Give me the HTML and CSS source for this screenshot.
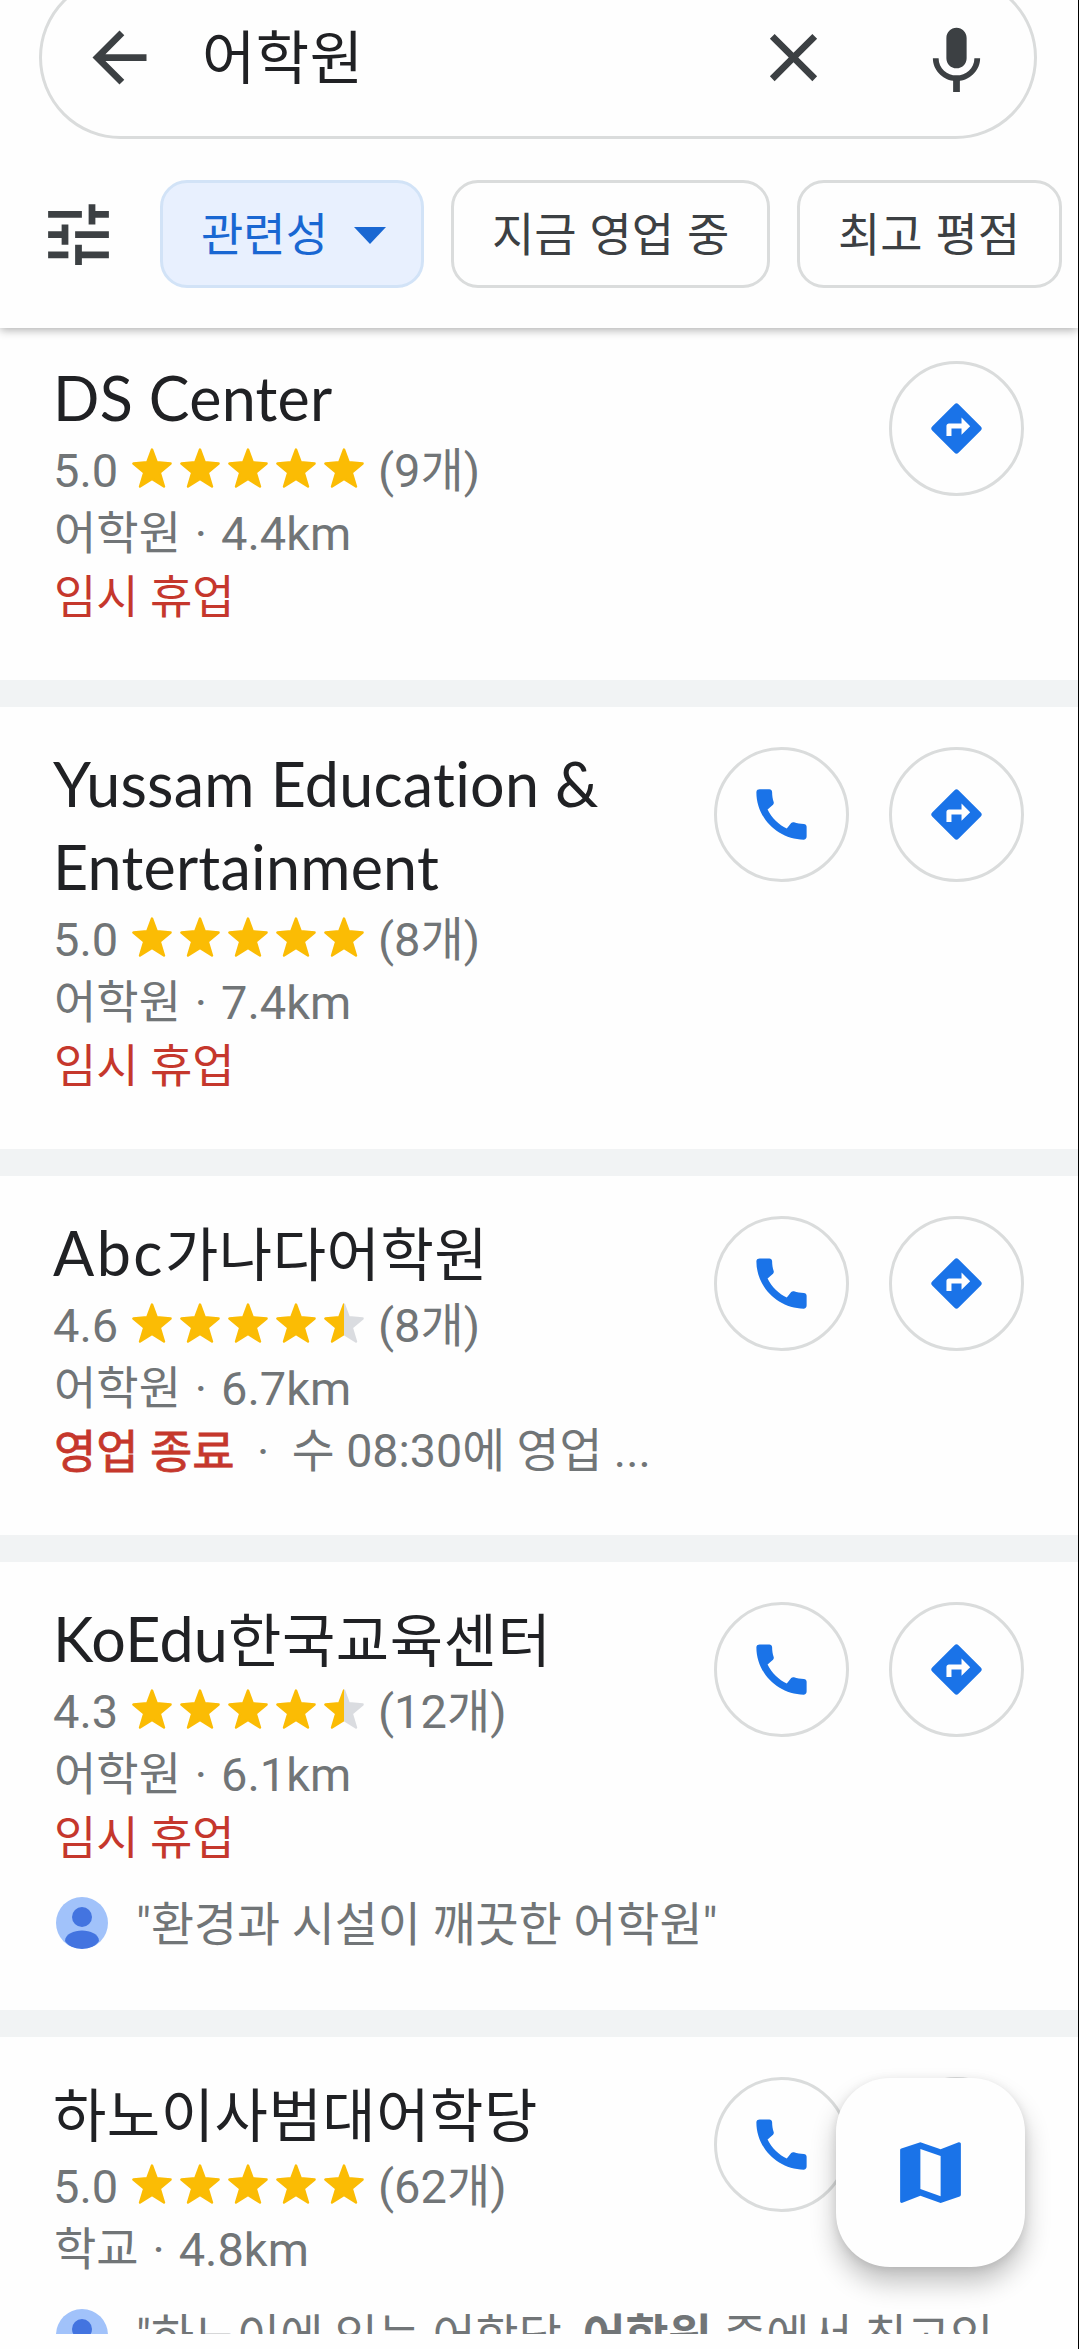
FILE: index.html
```html
<!DOCTYPE html>
<html lang="ko">
<head>
<meta charset="utf-8">
<title>어학원</title>
<link rel="stylesheet" href="styles.css">
</head>
<body>
<svg class="defs" width="0" height="0" aria-hidden="true">
  <defs>
    <linearGradient id="half"><stop offset="50%" stop-color="#fbbc04"/><stop offset="50%" stop-color="#dadce0"/></linearGradient>
    <path id="star-shape" stroke-width="2.4" stroke-linejoin="round" d="M20 1.500 24.800 14.300 38.600 15.500 27.800 24.600 32 38.500 20 31 8 38.500 12.200 24.600 1.400 15.500 15.200 14.300z"/>
    <symbol id="stars-5" viewBox="0 0 232 40">
      <g fill="#fbbc04" stroke="#fbbc04"><use href="#star-shape"/><use href="#star-shape" x="48"/><use href="#star-shape" x="96"/><use href="#star-shape" x="144"/><use href="#star-shape" x="192"/></g>
    </symbol>
    <symbol id="stars-45" viewBox="0 0 232 40">
      <g fill="#fbbc04" stroke="#fbbc04"><use href="#star-shape"/><use href="#star-shape" x="48"/><use href="#star-shape" x="96"/><use href="#star-shape" x="144"/></g>
      <use href="#star-shape" x="192" fill="url(#half)" stroke="url(#half)"/>
    </symbol>
    <symbol id="phone" viewBox="0 0 24 24"><path d="M20.01 15.38c-1.23 0-2.42-.2-3.53-.56-.35-.12-.74-.03-1.01.24l-1.57 1.97c-2.83-1.35-5.48-3.9-6.89-6.83l1.95-1.66c.27-.28.35-.67.24-1.02-.37-1.11-.56-2.3-.56-3.53 0-.54-.45-.99-.99-.99H4.19C3.65 3 3 3.24 3 3.99 3 13.28 10.73 21 20.01 21c.71 0 .99-.63.99-1.18v-3.45c0-.54-.45-.99-.99-.99z"/></symbol>
    <symbol id="directions" viewBox="0 0 24 24"><path d="M20.7 11.3l-8-8a1 1 0 0 0-1.41 0l-8 8a1 1 0 0 0 0 1.41l8 8a1 1 0 0 0 1.41 0l8-8a1 1 0 0 0 0-1.41zM13.8 14.2v-2.2h-3.6v2.7H8.4v-3.6c0-.5.4-.9.9-.9h4.5V8.1l3.1 3.05z"/></symbol>
    <symbol id="avatar" viewBox="0 0 52 52">
      <clipPath id="avatar-clip"><circle cx="26" cy="26" r="26"/></clipPath>
      <g clip-path="url(#avatar-clip)"><rect width="52" height="52" fill="#a1c2fa"/><circle cx="26" cy="20" r="10" fill="#4374e0"/><path fill="#4374e0" d="M9 44c0-7 9-10.500 17-10.500S43 37 43 44c-3 5-9 8-17 8S12 49 9 44z"/></g>
    </symbol>
  </defs>
</svg>
<div class="screen">
  <header class="header">
    <div class="search">
      <svg class="icon back" viewBox="0 0 24 24"><path d="M20 11H7.830l5.590-5.590L12 4l-8 8 8 8 1.410-1.410L7.830 13H20z"/></svg>
      <span class="query">어학원</span>
      <svg class="icon clear" viewBox="0 0 24 24"><path d="M19 6.410 17.590 5 12 10.590 6.410 5 5 6.410 10.590 12 5 17.590 6.410 19 12 13.410 17.590 19 19 17.590 13.410 12z"/></svg>
      <svg class="icon mic" viewBox="0 0 24 24"><path d="M12 14c1.660 0 3-1.340 3-3V5c0-1.660-1.340-3-3-3S9 3.340 9 5v6c0 1.660 1.340 3 3 3zm5.300-3c0 3-2.540 5.100-5.300 5.100S6.700 14 6.700 11H5c0 3.410 2.720 6.230 6 6.720V21h2v-3.280c3.280-.480 6-3.300 6-6.720z"/></svg>
    </div>
    <div class="filters">
      <svg class="icon tune" viewBox="0 0 24 24"><path d="M3 17v2h6v-2H3zM3 5v2h10V5H3zm10 16v-2h8v-2h-8v-2h-2v6h2zM7 9v2H3v2h4v2h2V9H7zm14 4v-2H11v2h10zm-6-4h2V7h4V5h-4V3h-2v6z"/></svg>
      <div class="chip chip-selected"><span>관련성</span><i class="caret"></i></div>
      <div class="chip chip-open">지금 영업 중</div>
      <div class="chip chip-top">최고 평점</div>
    </div>
  </header>

  <main class="results">
    <article class="place">
      <div class="info">
        <h2 class="name">DS Center</h2>
        <div class="row"><span class="score">5.0</span><svg class="stars"><use href="#stars-5"/></svg><span>(9개)</span></div>
        <div class="row"><span class="kind">어학원</span><span class="dot">·</span>4.4km</div>
        <div class="row closed">임시 휴업</div>
      </div>
      <div class="actions">
        <button class="round"><svg><use href="#directions"/></svg></button>
      </div>
    </article>

    <article class="place">
      <div class="info">
        <h2 class="name">Yussam Education &amp;<br>Entertainment</h2>
        <div class="row"><span class="score">5.0</span><svg class="stars"><use href="#stars-5"/></svg><span>(8개)</span></div>
        <div class="row"><span class="kind">어학원</span><span class="dot">·</span>7.4km</div>
        <div class="row closed">임시 휴업</div>
      </div>
      <div class="actions">
        <button class="round"><svg><use href="#phone"/></svg></button>
        <button class="round"><svg><use href="#directions"/></svg></button>
      </div>
    </article>

    <article class="place">
      <div class="info">
        <h2 class="name"><span class="spaced">Abc</span><span class="ko">가나다어학원</span></h2>
        <div class="row"><span class="score">4.6</span><svg class="stars"><use href="#stars-45"/></svg><span>(8개)</span></div>
        <div class="row"><span class="kind">어학원</span><span class="dot">·</span>6.7km</div>
        <div class="row"><span class="closed shut">영업 종료</span><span class="dot wide">·</span><span class="hours">수 08:30에 영업 ...</span></div>
      </div>
      <div class="actions">
        <button class="round"><svg><use href="#phone"/></svg></button>
        <button class="round"><svg><use href="#directions"/></svg></button>
      </div>
    </article>

    <article class="place">
      <div class="info">
        <h2 class="name">KoEdu<span class="ko">한국교육센터</span></h2>
        <div class="row"><span class="score">4.3</span><svg class="stars"><use href="#stars-45"/></svg><span>(12개)</span></div>
        <div class="row"><span class="kind">어학원</span><span class="dot">·</span>6.1km</div>
        <div class="row closed">임시 휴업</div>
        <div class="review"><svg class="avatar"><use href="#avatar"/></svg><span>"환경과 시설이 깨끗한 어학원"</span></div>
      </div>
      <div class="actions">
        <button class="round"><svg><use href="#phone"/></svg></button>
        <button class="round"><svg><use href="#directions"/></svg></button>
      </div>
    </article>

    <article class="place">
      <div class="info">
        <h2 class="name"><span class="ko">하노이사범대어학당</span></h2>
        <div class="row"><span class="score">5.0</span><svg class="stars"><use href="#stars-5"/></svg><span>(62개)</span></div>
        <div class="row"><span class="kind">학교</span><span class="dot">·</span>4.8km</div>
        <div class="review"><svg class="avatar"><use href="#avatar"/></svg><span>"하노이에 있는 어학당, <b>어학원</b> 중에서 최고인</span></div>
      </div>
      <div class="actions">
        <button class="round"><svg><use href="#phone"/></svg></button>
        <button class="round"><svg><use href="#directions"/></svg></button>
      </div>
    </article>
  </main>

  <button class="map-button"><svg viewBox="0 0 24 24"><path d="M20.500 3l-.160.030L15 5.100 9 3 3.360 4.900c-.210.070-.360.250-.360.480V20.500c0 .280.220.500.500.500l.160-.030L9 18.900l6 2.100 5.640-1.900c.210-.070.360-.250.360-.480V3.500c0-.280-.220-.500-.500-.500zM15 19l-6-2.110V5l6 2.110V19z"/></svg></button>
</div>
</body>
</html>
```
FILE: styles.css
```css
* { box-sizing: border-box; }

html, body { margin: 0; height: 2349px; overflow: hidden; }

body {
  background: #fefefe;
  color: #717577;
  font-family: Roboto, "Noto Sans CJK KR", sans-serif;
  font-size: 47px;
}

.defs { position: absolute; }

button {
  padding: 0;
  background: #fefefe;
  color: inherit;
  font: inherit;
}

.screen {
  position: relative;
  width: 1079px;
  height: 2349px;
  overflow: hidden;
  border-right: 1px solid #000;
}

/* Header */
.header {
  position: relative;
  z-index: 1;
  height: 328px;
  background: #fefefe;
  box-shadow: 0 2px 9px rgba(0, 0, 0, .32);
}

.search {
  display: flex;
  align-items: center;
  width: 998px;
  height: 163px;
  margin: 0 0 0 39px;
  transform: translateY(-24px);
  padding: 0 37px 0 37px;
  border: 3px solid #dadcdc;
  border-radius: 82px;
}

.icon { flex: none; width: 81px; height: 81px; fill: #3c4043; }

.query {
  flex: 1;
  margin-left: 42px;
  padding-bottom: 6px;
  color: #202124;
  font-family: "Noto Sans CJK KR", sans-serif;
  font-size: 58px;
  letter-spacing: .5px;
  line-height: 81px;
}

.clear { margin-right: 82px; }
.mic { margin-top: 8px; }

.filters {
  display: flex;
  align-items: center;
  margin-top: 17px;
  padding-left: 38px;
}

.chip {
  flex: none;
  display: flex;
  align-items: center;
  height: 108px;
  padding: 0 0 7px 38px;
  border: 3px solid #dadcdc;
  border-radius: 27px;
  color: #3c4043;
  font-family: "Noto Sans CJK KR", sans-serif;
  font-size: 46px;
  white-space: nowrap;
}

.chip-selected {
  width: 264px;
  margin-left: 41px;
  background: #e8f0fe;
  border-color: #d2e3f7;
  color: #1967d2;
}
.chip-open { width: 319px; margin-left: 27px; }
.chip-top { width: 265px; margin-left: 27px; }

.caret {
  margin: 9px 0 0 26px;
  border: solid transparent;
  border-width: 17px 16.500px 0;
  border-top-color: #1967d2;
}

/* Results */
.results { height: 2006px; overflow: hidden; }

.place {
  display: flex;
  justify-content: space-between;
  padding: 35px 54px 52px 53px;
  border-bottom: 27px solid #f1f3f4;
}
.place:first-child { margin-top: -7px; }

.info { width: 0; white-space: nowrap; }

.name {
  margin: 0;
  color: #202124;
  font-family: Lato, "Noto Sans CJK KR", sans-serif;
  font-size: 61px;
  font-weight: 400;
  font-variant-ligatures: none;
  letter-spacing: .250px;
  line-height: 83px;
}
.ko { font-size: 58px; letter-spacing: .5px; line-height: 1; }
.spaced { letter-spacing: 2.500px; }

.row {
  display: flex;
  height: 63px;
  line-height: 63px;
  white-space: pre;
}

.row > * { flex: none; }
.score { width: 79px; }
.stars { width: 232px; height: 40px; margin: 9px 14px 0 0; }
.kind { margin-left: 1px; font-size: 46px; }
.dot { width: 40px; text-align: center; }
.closed { padding-left: 1px; color: #c5372c; font-size: 46px; line-height: 64px; }
.shut { -webkit-text-stroke: .8px #c5372c; }
.wide { width: 57px; }
.hours { font-size: 46.600px; }

.actions { display: flex; gap: 40px; padding-top: 5px; }

.round {
  display: grid;
  place-items: center;
  width: 135px;
  height: 135px;
  border: 3px solid #dadcdc;
  border-radius: 50%;
}
.round svg { width: 67px; height: 67px; fill: #1a73e8; }

.review {
  display: flex;
  align-items: center;
  height: 52px;
  margin: 28px 0 9px 3px;
  font-size: 46.800px;
}
.review span { padding-bottom: 5px; }
.avatar { flex: none; width: 52px; height: 52px; margin-right: 28px; }

.map-button {
  position: absolute;
  left: 836px;
  top: 2078px;
  z-index: 2;
  display: grid;
  place-items: center;
  width: 189px;
  height: 189px;
  border: 0;
  border-radius: 54px;
  box-shadow: 0 16px 26px rgba(0, 0, 0, .24), 0 2px 10px rgba(0, 0, 0, .1);
}
.map-button svg { width: 81px; height: 81px; fill: #1a73e8; }
```
